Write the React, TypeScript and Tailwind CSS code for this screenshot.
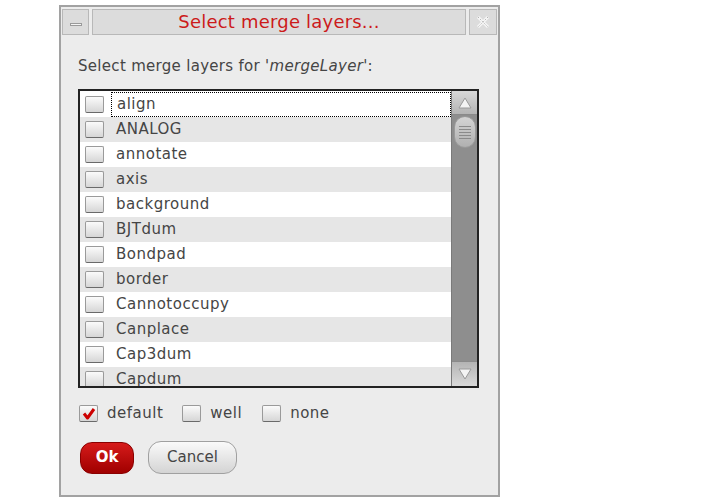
import React from 'react';

const layers = [
  'align',
  'ANALOG',
  'annotate',
  'axis',
  'background',
  'BJTdum',
  'Bondpad',
  'border',
  'Cannotoccupy',
  'Canplace',
  'Cap3dum',
  'Capdum',
];

function Box({ checked = false }: { checked?: boolean }) {
  return (
    <div className="relative w-[19px] h-[17px] shrink-0 rounded-[2px] border border-[#9a9a9a] border-b-[#6a6a6a] bg-gradient-to-b from-[#fbfbfb] to-[#d6d6d6]">
      {checked && (
        <svg className="absolute left-[2px] top-[1px]" width="14" height="14" viewBox="0 0 14 14">
          <path d="M2 6.5 L5.5 11 L12 2" fill="none" stroke="#cc0000" strokeWidth="3" strokeLinejoin="round" />
        </svg>
      )}
    </div>
  );
}

export default function App() {
  return (
    <div className="w-[713px] h-[502px] bg-white font-['DejaVu_Sans',sans-serif] text-[#454545]">
      <div className="ml-[59px] pt-[5px]">
        <div className="w-[441px] h-[492px] border-2 border-[#a2a2a2] bg-[#ececec] flex flex-col">
          {/* Title bar */}
          <div className="flex gap-[3px] px-[1px] pt-[2px] h-[28px]">
            <div className="w-[27px] border border-[#b8b8b8] bg-[#dcdcdc] flex items-center justify-center">
              <div className="w-[12px] h-[3px] border border-[#9a9a9a] bg-[#f4f4f4] mt-[4px]" />
            </div>
            <div className="flex-1 border border-[#b8b8b8] bg-[#dcdcdc] flex items-center justify-center text-[18px] tracking-[0.2px] text-[#cc1a1a] leading-none">
              Select merge layers...
            </div>
            <div className="w-[28px] border border-[#b8b8b8] bg-[#dcdcdc] flex items-center justify-center">
              <svg width="14" height="14" viewBox="0 0 14 14">
                <path d="M2 2 L12 12 M12 2 L2 12" stroke="#f6f6f6" strokeWidth="3" />
                <path d="M2 2 L12 12 M12 2 L2 12" stroke="#b4b4b4" strokeWidth="1" strokeDasharray="1.5 1.5" />
              </svg>
            </div>
          </div>

          <div className="px-[17px] pt-[24px] text-[15px] tracking-[0.3px] leading-none">
            Select merge layers for '<i>mergeLayer</i>':
          </div>

          {/* List */}
          <div className="ml-[17px] mr-[19px] mt-[15px] h-[299px] border-2 border-[#222] flex bg-white">
            <div className="flex-1 overflow-hidden pt-[1px]">
              {layers.map((l, i) => (
                <div
                  key={l}
                  className={`h-[25px] flex items-center ${i % 2 === 0 ? 'bg-white' : 'bg-[#e6e6e6]'}`}
                >
                  <div className="pl-[5px] pr-[7px]">
                    <Box />
                  </div>
                  <div
                    className={`flex-1 h-full flex items-center pl-[5px] text-[15px] tracking-[0.5px] ${
                      i === 0 ? 'border border-dotted border-black' : ''
                    }`}
                  >
                    {l}
                  </div>
                </div>
              ))}
            </div>
            {/* Scrollbar */}
            <div className="w-[26px] bg-[#8e8e8e] flex flex-col border-l border-[#7a7a7a]">
              <div className="h-[24px] bg-gradient-to-b from-[#d8d8d8] to-[#b4b4b4] flex items-center justify-center border-b border-[#8a8a8a]">
                <svg width="14" height="12" viewBox="0 0 14 12">
                  <path d="M7 1 L13 11 L1 11 Z" fill="#f4f4f4" stroke="#9a9a9a" strokeWidth="1" />
                </svg>
              </div>
              <div className="mx-auto mt-[1px] w-[22px] h-[32px] rounded-[11px] bg-gradient-to-b from-[#d4d4d4] to-[#b0b0b0] border border-[#9a9a9a] flex flex-col items-center justify-center gap-[2px]">
                <div className="w-[12px] h-[1px] bg-[#8a8a8a]" />
                <div className="w-[12px] h-[1px] bg-[#8a8a8a]" />
                <div className="w-[12px] h-[1px] bg-[#8a8a8a]" />
                <div className="w-[12px] h-[1px] bg-[#8a8a8a]" />
                <div className="w-[12px] h-[1px] bg-[#8a8a8a]" />
              </div>
              <div className="flex-1" />
              <div className="h-[25px] bg-gradient-to-b from-[#b4b4b4] to-[#dadada] flex items-center justify-center border-t border-[#8a8a8a]">
                <svg width="14" height="12" viewBox="0 0 14 12">
                  <path d="M1 1 L13 1 L7 11 Z" fill="#f4f4f4" stroke="#9a9a9a" strokeWidth="1" />
                </svg>
              </div>
            </div>
          </div>

          {/* Options */}
          <div className="flex items-center pl-[18px] mt-[17px] text-[15px] tracking-[0.5px] leading-none">
            <Box checked />
            <span className="ml-[9px]">default</span>
            <div className="ml-[19px]">
              <Box />
            </div>
            <span className="ml-[9px]">well</span>
            <div className="ml-[20px]">
              <Box />
            </div>
            <span className="ml-[9px]">none</span>
          </div>

          {/* Buttons */}
          <div className="flex items-center gap-[14px] pl-[19px] mt-[19px]">
            <button className="w-[54px] h-[32px] rounded-[12px] bg-gradient-to-b from-[#d61a1a] to-[#a00000] border border-[#8a0000] text-white font-bold text-[15px]">
              Ok
            </button>
            <button className="w-[89px] h-[33px] rounded-[13px] bg-gradient-to-b from-[#fafafa] to-[#d4d4d4] border border-[#a0a0a0] text-[#454545] text-[15px]">
              Cancel
            </button>
          </div>
        </div>
      </div>
    </div>
  );
}
